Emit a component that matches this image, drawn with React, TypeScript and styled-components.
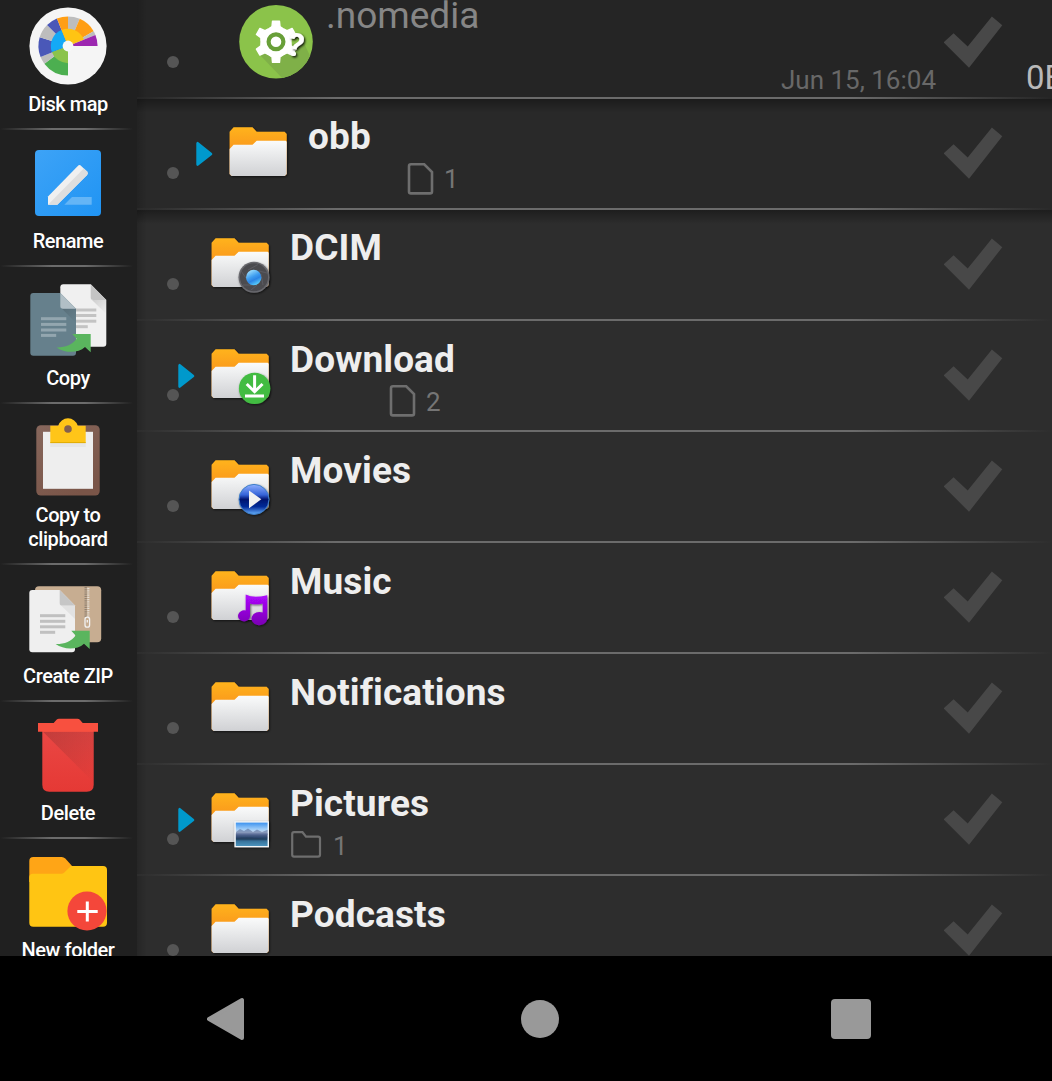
import React from "react";
import styled, { createGlobalStyle } from "styled-components";

const GlobalStyle = createGlobalStyle`
  * { box-sizing: border-box; }
  html, body { margin: 0; padding: 0; background: #000; }
  body { font-family: Roboto, "Liberation Sans", sans-serif; overflow: hidden; }
  svg { display: block; }
`;

const Screen = styled.div`
  display: flex;
  flex-direction: column;
  width: 1052px;
  height: 1081px;
  overflow: hidden;
  background: #000;
`;

const Main = styled.main`
  display: flex;
  height: 956px;
  flex: none;
  overflow: hidden;
`;

const Sidebar = styled.aside`
  width: 137px;
  flex: none;
  margin-top: -7px;
  background: #202020;
`;

const Action = styled.div`
  display: flex;
  flex-direction: column;
  align-items: center;
  padding: 13px 1px 12px 0;
`;

const ActionLabel = styled.div`
  margin-top: 6px;
  width: 116px;
  text-align: center;
  font-size: 20px;
  font-weight: 500;
  line-height: 24px;
  letter-spacing: -0.45px;
  color: #fff;
`;

const ActionDivider = styled.div`
  height: 2px;
  background: linear-gradient(90deg, #202020 0%, #6c6c6c 38%, #6c6c6c 62%, #202020 97%);
`;

const List = styled.section`
  flex: 1;
  min-width: 0;
  margin-top: -12px;
`;

const Row = styled.div<{ $bg: string; $shadow?: boolean }>`
  display: flex;
  align-items: flex-start;
  height: 109px;
  overflow: hidden;
  background:
    linear-gradient(90deg, rgba(0, 0, 0, 0.16), rgba(0, 0, 0, 0) 10px),
    ${(p) => (p.$shadow ? "linear-gradient(180deg, rgba(0,0,0,0.34), rgba(0,0,0,0) 14px)," : "")}
    ${(p) => `linear-gradient(${p.$bg}, ${p.$bg})`};
`;

const RowDivider = styled.div<{ $bg: string }>`
  height: 2px;
  background: linear-gradient(90deg, ${(p) => p.$bg} 0, #6b6b6b 200px, #6b6b6b 715px, ${(p) => p.$bg} 100%);
`;

const Dot = styled.span`
  flex: none;
  width: 12px;
  height: 12px;
  margin: 67.5px 0 0 30px;
  border-radius: 50%;
  background: #555;
`;

const ArrowSlot = styled.span<{ $indent: number }>`
  flex: none;
  width: 18px;
  height: 26px;
  margin: 41.5px 0 0 ${(p) => p.$indent - 1}px;
`;

const IconSlot = styled.span`
  flex: none;
  width: 74px;
  height: 74px;
  margin: 17px 13px 0 7px;
`;

const Details = styled.div<{ $file?: boolean }>`
  flex: 1;
  min-width: 0;
  padding-top: ${(p) => (p.$file ? 7 : 16)}px;
`;

const Title = styled.div<{ $file?: boolean; $drop: number }>`
  padding-top: ${(p) => p.$drop}px;
  height: ${(p) => (p.$file ? 42 : 44)}px;
  font-size: 37px;
  line-height: 42px;
  letter-spacing: ${(p) => (p.$file ? 0 : 0.1)}px;
  white-space: nowrap;
  font-weight: ${(p) => (p.$file ? 400 : 700)};
  color: ${(p) => (p.$file ? "#868686" : "#eee")};
`;

const Meta = styled.div`
  display: flex;
  margin-top: 4px;
  height: 32px;
  line-height: 32px;
  font-size: 26px;
  color: #757575;
`;

const Count = styled.span<{ $gap: number; $width?: number }>`
  display: flex;
  align-items: flex-start;
  gap: ${(p) => p.$gap}px;
  width: ${(p) => (p.$width ? `${p.$width}px` : "auto")};
`;

const CountValue = styled.span<{ $drop: number }>`
  padding-top: ${(p) => p.$drop}px;
`;

const DateText = styled.div`
  margin-top: 27px;
  padding-right: 1px;
  text-align: right;
  font-size: 26px;
  line-height: 32px;
  color: #686868;
`;

const CheckSlot = styled.span`
  flex: none;
  margin: 28px 0 0 7px;
`;

const SizeColumn = styled.div`
  flex: none;
  width: 49px;
  padding: 70px 0 0 23px;
  font-size: 33px;
  line-height: 40px;
  white-space: nowrap;
  color: #b9b9b9;
`;

const NavBar = styled.nav`
  display: grid;
  grid-template-columns: repeat(3, 311px);
  place-items: center;
  flex: 1;
  padding: 1px 0 0 73px;
`;

/* ---------- sidebar icons ---------- */

const polar = (r: number, deg: number) => {
  const a = ((deg - 90) * Math.PI) / 180;
  return `${(40 + r * Math.cos(a)).toFixed(2)} ${(40 + r * Math.sin(a)).toFixed(2)}`;
};
const wedge = (r: number, from: number, to: number) =>
  `M40 40L${polar(r, from)}A${r} ${r} 0 0 1 ${polar(r, to)}Z`;

const slices: [number, number, number, string][] = [
  [29.6, 180, 233, "#4caf50"],
  [29.6, 233, 248, "#bdbdbd"],
  [29.6, 248, 287, "#4a58b8"],
  [29.6, 287, 315, "#bdbdbd"],
  [29.6, 315, 338, "#4a58b8"],
  [29.6, 338, 360, "#ff9e14"],
  [29.6, 0, 23.5, "#bdbdbd"],
  [29.6, 23.5, 60, "#ff9e14"],
  [29.6, 60, 68, "#bdbdbd"],
  [29.6, 68, 90, "#9c27b0"],
  [17.2, 180, 250, "#8bc34a"],
  [17.2, 250, 338, "#14a9f6"],
  [17.2, 338, 428, "#ffc413"],
];

const DiskMapIcon = () => (
  <svg width="80" height="80" viewBox="0 0 80 80">
    <circle cx="40" cy="40" r="38.6" fill="#f5f5f5" />
    {slices.map(([r, a, b, c]) => (
      <path key={`${r}-${a}`} d={wedge(r, a, b)} fill={c} />
    ))}
    <circle cx="40" cy="40" r="5.4" fill="#f8f8f8" />
  </svg>
);

const RenameIcon = () => (
  <svg width="80" height="80" viewBox="0 0 80 80">
    <defs>
      <linearGradient id="renameBg" x1="0" y1="0" x2="1" y2="1">
        <stop offset="0" stopColor="#3da3f7" />
        <stop offset="1" stopColor="#2094f3" />
      </linearGradient>
    </defs>
    <rect x="7" y="7" width="66" height="66" rx="4" fill="url(#renameBg)" />
    <path d="M36.3 61.7L44 54H63.7V61.7Z" fill="#64b5f6" />
    <path d="M20 53.4L49.8 22.9Q51.5 21.3 53.2 22.9L59.1 28.6Q60.7 30.3 59.1 32L29.3 61.7H20Z" fill="#f0f0f0" />
    <path d="M20 61.7L55.8 25.5L59.1 28.6Q60.7 30.3 59.1 32L29.3 61.7Z" fill="#dedede" />
  </svg>
);

const GreenArrow = ({ dx = 0, dy = 0 }: { dx?: number; dy?: number }) => (
  <path
    transform={`translate(${dx} ${dy})`}
    d="M28.6 67.4C37 67.6 44.5 65 48.6 58.8L44.3 54H62.7V72.2L57 67C50 73.5 37 73.3 28.6 67.4Z"
    fill="#5ab55e"
  />
);

const Lines = ({ x, w, ys, color }: { x: number; w: number; ys: number[]; color: string }) => (
  <g fill={color}>
    {ys.map((y, i) => (
      <rect key={y} x={x} y={y - 1.5} width={i === 3 ? w * 0.6 : w} height="3" />
    ))}
  </g>
);

const CopyIcon = () => (
  <svg width="80" height="80" viewBox="0 0 80 80">
    <defs>
      <linearGradient id="copyFold" x1="0" y1="0" x2="1" y2="1">
        <stop offset="0" stopColor="#000" stopOpacity="0.14" />
        <stop offset="1" stopColor="#000" stopOpacity="0" />
      </linearGradient>
    </defs>
    <path d="M35.3 4.3H62.7L78.3 19.9V63.7Q78.3 66.7 75.3 66.7H35.3Q32.3 66.7 32.3 63.7V7.3Q32.3 4.3 35.3 4.3Z" fill="#f0f0f0" />
    <path d="M64 20L78.3 34V19.9Z" fill="url(#copyFold)" />
    <path d="M62.7 4.3L78.3 19.9H65.2Q62.7 19.9 62.7 17.4Z" fill="#c4c4c4" />
    <Lines x={47} w={21.3} ys={[30, 35.5, 41.2, 46.7]} color="#c3c3c3" />
    <path d="M5.3 13H32.3L48 28.7V72.7Q48 75.7 45 75.7H5.3Q2.3 75.7 2.3 72.7V16Q2.3 13 5.3 13Z" fill="#66808c" />
    <path d="M34 28.7L48 43V28.7Z" fill="url(#copyFold)" />
    <path d="M32.3 13L48 28.7H35Q32.3 28.7 32.3 26Z" fill="#b1bfc6" />
    <Lines x={13} w={25.3} ys={[38.7, 44.4, 50, 55.4]} color="#93a6af" />
    <GreenArrow />
  </svg>
);

const ClipboardIcon = () => (
  <svg width="80" height="80" viewBox="0 0 80 80">
    <defs>
      <linearGradient id="clipBoard" x1="0" y1="0" x2="0.6" y2="1">
        <stop offset="0" stopColor="#87675c" />
        <stop offset="1" stopColor="#7a5548" />
      </linearGradient>
    </defs>
    <rect x="8.3" y="8.3" width="63.4" height="70.3" rx="4.5" fill="url(#clipBoard)" />
    <rect x="15" y="14.8" width="50" height="57" fill="#eee" />
    <rect x="22.3" y="26" width="35.4" height="4" fill="#e6e6e6" />
    <path d="M22.3 8.7H30.2A10.2 10.2 0 0 1 49.8 8.7H57.7V26H22.3Z" fill="#ffc518" />
    <rect x="22.3" y="25.2" width="35.4" height="0.9" fill="#dda900" />
    <circle cx="40" cy="12" r="3.8" fill="#83604f" />
  </svg>
);

const ZipIcon = () => (
  <svg width="80" height="80" viewBox="0 0 80 80">
    <rect x="7" y="8.3" width="66.2" height="56" rx="4" fill="#c7ad91" />
    <path d="M57.7 9V39" stroke="#8f8173" strokeWidth="2.4" strokeDasharray="1.2 1" />
    <path d="M60.3 10V39" stroke="#e4ded6" strokeWidth="2.2" strokeDasharray="1.2 1" />
    <rect x="57" y="39.2" width="4.6" height="10" rx="2.2" fill="none" stroke="#f2f2f2" strokeWidth="1.3" />
    <path d="M59.3 42V44.5" stroke="#f2f2f2" strokeWidth="1.3" />
    <path d="M4.3 12H31.7L47 27.6V71.3Q47 74.3 44 74.3H4.3Q1.3 74.3 1.3 71.3V15Q1.3 12 4.3 12Z" fill="#efefef" />
    <path d="M33 27.6L47 41V27.6Z" fill="#000" opacity="0.05" />
    <path d="M31.7 12L47 27.6H34.2Q31.7 27.6 31.7 25Z" fill="#c6c6c6" />
    <Lines x={12} w={25.3} ys={[37.7, 43.3, 48.8, 54.3]} color="#c0c0c0" />
    <GreenArrow dx={-1} dy={-1.3} />
  </svg>
);

const DeleteIcon = () => (
  <svg width="80" height="80" viewBox="0 0 80 80">
    <defs>
      <linearGradient id="binBody" x1="0" y1="0" x2="0" y2="1">
        <stop offset="0" stopColor="#ea4744" />
        <stop offset="1" stopColor="#e53935" />
      </linearGradient>
      <linearGradient id="binShade" x1="0" y1="0" x2="0.8" y2="1">
        <stop offset="0" stopColor="#8a3030" stopOpacity="0.42" />
        <stop offset="1" stopColor="#8a3030" stopOpacity="0.03" />
      </linearGradient>
    </defs>
    <path d="M14.3 16H65.7V69.7Q65.7 76.7 58.7 76.7H21.3Q14.3 76.7 14.3 69.7Z" fill="url(#binBody)" />
    <path d="M15 16.7H65.7V67.4Z" fill="url(#binShade)" />
    <path d="M10 8H25.7L28.5 4.8Q29.5 3.7 31 3.7H49.4Q50.9 3.7 51.9 4.8L54.7 8H70V16.7H10Z" fill="#f8503f" />
  </svg>
);

const NewFolderIcon = () => (
  <svg width="80" height="80" viewBox="0 0 80 80">
    <path d="M5.3 5H33.7Q35.8 5 37.3 6.6L44.5 14.5V30H1.3V9Q1.3 5 5.3 5Z" fill="#ffa516" />
    <path d="M5 21.7H33.5Q35 21.7 36.3 20.4L43 14H75Q79 14 79 18V70.7Q79 74.7 75 74.7H5.3Q1.3 74.7 1.3 70.7V25.4Q1.3 21.7 5 21.7Z" fill="#ffc513" />
    <circle cx="59" cy="59" r="19.6" fill="#f4473a" />
    <path d="M59.3 49.5V69.5M49.3 59.4H69.7" stroke="#fff" strokeWidth="3" />
  </svg>
);

/* ---------- list icons ---------- */

const FolderIcon = ({ children }: { children?: React.ReactNode }) => (
  <svg width="74" height="74" viewBox="0 0 74 74">
    <defs>
      <linearGradient id="folderBack" x1="0" y1="0" x2="0" y2="1">
        <stop offset="0" stopColor="#ffb31c" />
        <stop offset="0.5" stopColor="#f9951a" />
      </linearGradient>
      <linearGradient id="folderFront" x1="0" y1="0" x2="0" y2="1">
        <stop offset="0" stopColor="#fafbfb" />
        <stop offset="1" stopColor="#d0d1d4" />
      </linearGradient>
      <filter id="folderShadow" x="-20%" y="-20%" width="140%" height="140%">
        <feDropShadow dx="0.8" dy="1" stdDeviation="0.9" floodColor="#000" floodOpacity="0.6" />
      </filter>
    </defs>
    <g filter="url(#folderShadow)">
      <path d="M8.6 15.7L12.6 11.3H31.5L35.7 15.7H63.6L65.7 18V58L63.7 60H10.6L8.6 58Z" fill="url(#folderBack)" />
      <path d="M8.6 33L12.6 28.7H31.5L35.7 24.7H64.7L65.7 25.7V58L63.7 60H10.6L8.6 58Z" fill="url(#folderFront)" />
    </g>
    {children ? <g filter="url(#folderShadow)">{children}</g> : null}
  </svg>
);

const CameraBadge = () => (
  <g>
    <defs>
      <linearGradient id="lens" x1="0.2" y1="0" x2="0.7" y2="1">
        <stop offset="0" stopColor="#a9e6ff" />
        <stop offset="0.45" stopColor="#3d9df0" />
        <stop offset="0.65" stopColor="#2b83e4" />
        <stop offset="1" stopColor="#5ed8ff" />
      </linearGradient>
    </defs>
    <circle cx="51" cy="50.3" r="15.5" fill="#68686d" />
    <circle cx="51" cy="50.3" r="14" fill="#4b4b50" />
    <g stroke="#606066" strokeWidth="0.8" fill="none">
      <path d="M45 43L55 37.5M58 47L60 58M50 58L40 58M43 51L38 44M56 44L64 46M54 58L48 63" />
    </g>
    <circle cx="50.7" cy="50.5" r="7.7" fill="url(#lens)" />
  </g>
);

const DownloadBadge = () => (
  <g>
    <circle cx="51.6" cy="50.4" r="15.7" fill="#43bc43" />
    <g stroke="#fff" strokeWidth="3" fill="none">
      <path d="M51.6 37.2V53.5M43.7 46L51.6 53.7L59.5 46M42 58H61" />
    </g>
  </g>
);

const PlayBadge = () => (
  <g>
    <defs>
      <linearGradient id="playBg" x1="0" y1="0" x2="0" y2="1">
        <stop offset="0" stopColor="#8fb0ff" />
        <stop offset="0.35" stopColor="#3563d8" />
        <stop offset="0.5" stopColor="#03146e" />
        <stop offset="0.75" stopColor="#062c9a" />
        <stop offset="1" stopColor="#68b4ff" />
      </linearGradient>
    </defs>
    <circle cx="51" cy="50.4" r="15" fill="url(#playBg)" stroke="#3f7fc8" strokeWidth="1" />
    <path d="M46 41.5L58.3 50.2L46 59.3Z" fill="#f1f1f1" />
  </g>
);

const MusicBadge = () => (
  <g>
    <defs>
      <linearGradient id="noteFill" x1="0" y1="0" x2="0" y2="1">
        <stop offset="0" stopColor="#ae08ff" />
        <stop offset="1" stopColor="#7b00b4" />
      </linearGradient>
    </defs>
    <path
      d="M42.7 34.5Q50 38.6 64.2 35.2V59.6A7.9 6.6 0 1 1 59.7 52.6V43.4Q52 45.2 47 43.4V56.4A6 5.5 0 1 1 42.7 50.6Z"
      fill="url(#noteFill)"
    />
  </g>
);

const PictureBadge = () => (
  <g>
    <defs>
      <linearGradient id="photo" x1="0" y1="0" x2="0" y2="1">
        <stop offset="0" stopColor="#3d92ef" />
        <stop offset="0.28" stopColor="#9fcdf8" />
        <stop offset="0.42" stopColor="#c8d7ec" />
        <stop offset="0.5" stopColor="#566791" />
        <stop offset="0.66" stopColor="#28436a" />
        <stop offset="0.72" stopColor="#31668f" />
        <stop offset="1" stopColor="#4b93bd" />
      </linearGradient>
    </defs>
    <rect x="31.4" y="39.3" width="34.6" height="26" fill="#f3f6f8" />
    <rect x="32.8" y="40.6" width="31.8" height="23.4" fill="url(#photo)" />
    <path d="M33 50L37 47L41 49L45 46.5L50 50L54 47.5L59 50L64.6 47.8V53H33Z" fill="#5e6f9a" opacity="0.6" />
    <path d="M33 56L44 55.4L64 56.6V58.2H33Z" fill="#233c55" opacity="0.7" />
  </g>
);

const tooth = "M30.4 23.6L33 21.6L33.5 16.2H40.5L41 21.6L43.6 23.6Z";

const SystemFileIcon = () => (
  <svg width="74" height="74" viewBox="0 0 74 74">
    <defs>
      <clipPath id="disc">
        <circle cx="37" cy="36.8" r="36.8" />
      </clipPath>
      <filter id="markShadow" x="-50%" y="-50%" width="200%" height="200%">
        <feDropShadow dx="1.2" dy="1.4" stdDeviation="1.1" floodColor="#000" floodOpacity="0.95" />
      </filter>
    </defs>
    <circle cx="37" cy="36.8" r="36.8" fill="#8bc34a" />
    <path d="M20 49L46 76L80 70L64 36Z" fill="#7fb048" clipPath="url(#disc)" />
    <g fill="#fff">
      <circle cx="37" cy="36.8" r="15.6" />
      {[0, 60, 120, 180, 240, 300].map((a) => (
        <path key={a} d={tooth} transform={`rotate(${a} 37 36.8)`} stroke="#fff" strokeWidth="1.4" strokeLinejoin="round" />
      ))}
    </g>
    <circle cx="37" cy="36.8" r="7.4" fill="#fff" stroke="#689f38" strokeWidth="4.2" />
    <g filter="url(#markShadow)">
      <text x="48.8" y="51" fontFamily="Roboto, sans-serif" fontSize="32" fontWeight="700" fill="#fff" transform="rotate(12 56 40)">
        ?
      </text>
    </g>
  </svg>
);

const Arrow = () => (
  <svg width="18" height="26" viewBox="0 0 18 26">
    <path d="M1.6 2.2V23.6L15 13Z" fill="#0099cc" stroke="#0099cc" strokeWidth="2.6" strokeLinejoin="round" />
  </svg>
);

const Check = () => (
  <svg width="59" height="52" viewBox="0 0 59 52">
    <path d="M-0.3 26.4L9.6 17.2L23.7 30.6L47.9 0.5L58.3 9.2L25 51.8Z" fill="#484848" />
  </svg>
);

const FileOutline = () => (
  <svg width="27" height="32" viewBox="0 0 27 32">
    <path d="M4 1.3H17.2L25 9V28.4Q25 30.4 23 30.4H4Q2 30.4 2 28.4V3.3Q2 1.3 4 1.3Z" fill="none" stroke="#6e6e6e" strokeWidth="2.6" />
  </svg>
);

const FolderOutline = () => (
  <svg width="32" height="30" viewBox="0 0 32 30">
    <path d="M4 3.2H12.5L16 7.6H28Q30 7.6 30 9.4V25.8Q30 27.6 28 27.6H4Q2.2 27.6 2.2 25.8V5.2Q2.2 3.2 4 3.2Z" fill="none" stroke="#6e6e6e" strokeWidth="2.2" />
  </svg>
);

/* ---------- data ---------- */

const actions = [
  { label: "Disk map", icon: <DiskMapIcon /> },
  { label: "Rename", icon: <RenameIcon /> },
  { label: "Copy", icon: <CopyIcon /> },
  { label: "Copy to clipboard", icon: <ClipboardIcon /> },
  { label: "Create ZIP", icon: <ZipIcon /> },
  { label: "Delete", icon: <DeleteIcon /> },
  { label: "New folder", icon: <NewFolderIcon /> },
];

type Entry = {
  name: string;
  level: number;
  icon?: React.ReactNode;
  expandable?: boolean;
  shadow?: boolean;
  folders?: number;
  files?: number;
  date?: string;
  size?: string;
};

const entries: Entry[] = [
  { name: ".nomedia", level: 2, date: "Jun 15, 16:04", size: "0B" },
  { name: "obb", level: 1, expandable: true, files: 1, shadow: true },
  { name: "DCIM", level: 0, icon: <CameraBadge />, shadow: true },
  { name: "Download", level: 0, icon: <DownloadBadge />, expandable: true, files: 2 },
  { name: "Movies", level: 0, icon: <PlayBadge /> },
  { name: "Music", level: 0, icon: <MusicBadge /> },
  { name: "Notifications", level: 0 },
  { name: "Pictures", level: 0, icon: <PictureBadge />, expandable: true, folders: 1 },
  { name: "Podcasts", level: 0 },
];

const levelColors = ["#2d2d2d", "#292929", "#252525"];

const EntryRow = ({ entry }: { entry: Entry }) => {
  const isFile = entry.date !== undefined;
  const bg = levelColors[entry.level];
  return (
    <>
      <Row $bg={bg} $shadow={entry.shadow}>
        <Dot />
        <ArrowSlot $indent={entry.level * 18}>{entry.expandable && <Arrow />}</ArrowSlot>
        <IconSlot>{isFile ? <SystemFileIcon /> : <FolderIcon>{entry.icon}</FolderIcon>}</IconSlot>
        <Details $file={isFile}>
          <Title $file={isFile} $drop={isFile ? 0 : entry.shadow ? 1 : 2}>
            {entry.name}
          </Title>
          {isFile && <DateText>{entry.date}</DateText>}
          {(entry.folders || entry.files) && (
            <Meta>
              <Count $gap={11} $width={99}>
                {entry.folders && (
                  <>
                    <FolderOutline />
                    <CountValue $drop={1}>{entry.folders}</CountValue>
                  </>
                )}
              </Count>
              {entry.files && (
                <Count $gap={10}>
                  <FileOutline />
                  <CountValue $drop={entry.shadow ? 0 : 1}>{entry.files}</CountValue>
                </Count>
              )}
            </Meta>
          )}
        </Details>
        <CheckSlot>
          <Check />
        </CheckSlot>
        <SizeColumn>{entry.size}</SizeColumn>
      </Row>
      <RowDivider $bg={bg} />
    </>
  );
};

export default function App() {
  return (
    <Screen>
      <GlobalStyle />
      <Main>
        <Sidebar>
          {actions.map((a) => (
            <React.Fragment key={a.label}>
              <Action>
                {a.icon}
                <ActionLabel>{a.label}</ActionLabel>
              </Action>
              <ActionDivider />
            </React.Fragment>
          ))}
        </Sidebar>
        <List>
          {entries.map((e) => (
            <EntryRow key={e.name} entry={e} />
          ))}
        </List>
      </Main>
      <NavBar>
        <svg width="44" height="44" viewBox="0 0 44 44">
          <path d="M2 22L35 3V41Z" fill="#999" stroke="#999" strokeWidth="4" strokeLinejoin="round" />
        </svg>
        <svg width="40" height="40" viewBox="0 0 40 40">
          <circle cx="20" cy="20" r="19" fill="#999" />
        </svg>
        <svg width="40" height="40" viewBox="0 0 40 40">
          <rect width="40" height="40" rx="4" fill="#999" />
        </svg>
      </NavBar>
    </Screen>
  );
}
